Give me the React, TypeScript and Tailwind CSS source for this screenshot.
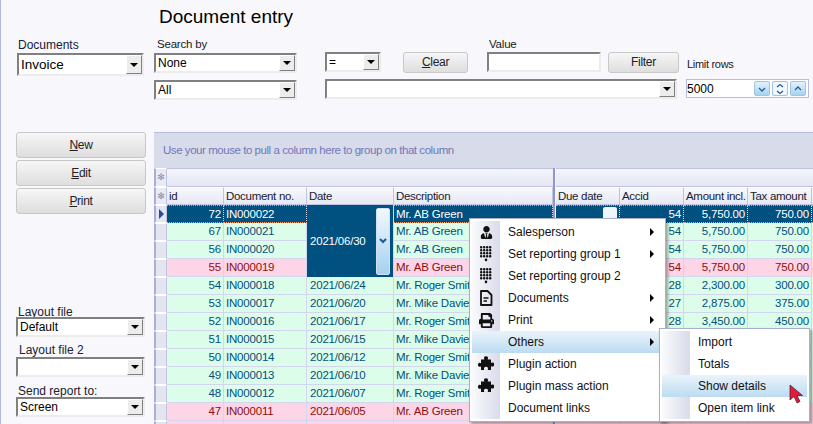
import React from 'react';
import { FaUserTie, FaPrint } from 'react-icons/fa';

type Row = { id: number; label: string; doc: string; date: string; desc: string; accid: string; amount: string; tax: string; pink?: boolean };

const row = (id: number, doc: string, date: string, desc: string, accid: string, amount: string, tax: string, pink?: boolean): Row => ({
  id, label: id ? String(id) : '', doc, date, desc, accid, amount, tax, pink,
});

const rows: Row[] = [
  row(72, 'IN000022', '', 'Mr. AB Green', '54', '5,750.00', '750.00'),
  row(67, 'IN000021', '', 'Mr. AB Green', '54', '5,750.00', '750.00'),
  row(56, 'IN000020', '', 'Mr. AB Green', '54', '5,750.00', '750.00'),
  row(55, 'IN000019', '', 'Mr. AB Green', '54', '5,750.00', '750.00', true),
  row(54, 'IN000018', '2021/06/24', 'Mr. Roger Smith', '28', '2,300.00', '300.00'),
  row(53, 'IN000017', '2021/06/20', 'Mr. Mike Davies', '27', '2,875.00', '375.00'),
  row(52, 'IN000016', '2021/06/17', 'Mr. Roger Smith', '28', '3,450.00', '450.00'),
  row(51, 'IN000015', '2021/06/15', 'Mr. Mike Davies', '', '', ''),
  row(50, 'IN000014', '2021/06/12', 'Mr. Roger Smith', '', '', ''),
  row(49, 'IN000013', '2021/06/10', 'Mr. Mike Davies', '', '', ''),
  row(48, 'IN000012', '2021/06/07', 'Mr. Roger Smith', '', '', ''),
  row(47, 'IN000011', '2021/06/05', 'Mr. AB Green', '', '', '', true),
  row(0, '', '', '', '', '', '', true),
];

const Combo = ({ text, big, className = '' }: { text: string; big?: boolean; className?: string }) => (
  <div className={`flex items-stretch bg-white border-2 border-t-[#808080] border-l-[#808080] border-b-[#ececec] border-r-[#ececec] ${className}`}>
    <span className={`flex-1 pl-[2px] self-center text-black whitespace-nowrap overflow-hidden ${big ? 'text-[13.5px] leading-[19px]' : 'text-[12px] leading-[16px]'}`}>{text}</span>
    <span className="w-[16px] flex items-center justify-center bg-[#ececec] border border-t-white border-l-white border-b-[#808080] border-r-[#808080]">
      <span className="w-0 h-0 border-x-[4px] border-x-transparent border-t-[4px] border-t-black" />
    </span>
  </div>
);

const Btn = ({ className = '', children }: { className?: string; children: React.ReactNode }) => (
  <div className={`flex items-center justify-center rounded-[3px] border border-[#c8c8c8] bg-gradient-to-b from-[#f6f6f6] to-[#dedede] text-[12px] leading-[17px] tracking-[-0.3px] text-[#222] ${className}`}>
    {children}
  </div>
);

const Keypad = () => (
  <svg width="14" height="16" viewBox="0 0 14 16" fill="#111">
    {[0, 1, 2, 3].map((r) =>
      [0, 1, 2, 3].map((c) => <rect key={`${r}${c}`} x={1 + c * 3} y={r * 3} width="2.4" height="2.4" rx="1" />)
    )}
    <rect x="5.8" y="12.6" width="2.4" height="2.6" rx="1" />
  </svg>
);

const DocIcon = () => (
  <svg width="14" height="16" viewBox="0 0 14 16" fill="none" stroke="#111" strokeWidth="1.8">
    <path d="M2 1h6.500L12.500 5v10H2z" strokeLinejoin="round" />
    <path d="M4.500 8h5M4.500 11h3.500" strokeWidth="1.5" />
  </svg>
);

const Puzzle = () => (
  <svg width="16" height="16" viewBox="0 0 16 16" fill="#111">
    <path d="M6 1.500a2.200 2.200 0 0 1 4 0c.2.8-.3 1.300-.3 2H13v3.300c.7 0 1.200-.5 2-.3a2.200 2.200 0 0 1 0 4c-.8.2-1.300-.3-2-.3V14H9.700c0-.7.5-1.200.3-2a2.200 2.200 0 0 0-4 0c-.2.800.3 1.300.3 2H3v-3.500c-.7 0-1 .5-1.800.3a2.200 2.200 0 0 1 0-4C2 6.600 2.300 7 3 7V3.500h3.300c0-.7-.5-1.200-.3-2z" />
  </svg>
);

const Cursor = () => (
  <svg width="15" height="20" viewBox="0 0 15 20">
    <path d="M1 1v15l4-3.500 3 6.500 3-1.500-3-6h5.500z" fill="#e8173c" stroke="#333" strokeWidth="0.8" />
  </svg>
);

type MenuItem = { label: string; icon?: React.ReactNode; sub?: boolean; active?: boolean };

const MenuList = ({ items }: { items: MenuItem[] }) => (
  <div className="relative bg-white">
    <div className="absolute left-0 top-0 bottom-0 w-[28px] bg-gradient-to-r from-[#fbfbfd] to-[#d8dbe9]" />
    {items.map((it) => (
      <div key={it.label} className={`relative flex items-center h-[22px] text-[12px] text-[#111] ${it.active ? 'bg-gradient-to-b from-[#eaf3fb] to-[#bcdcf1]' : ''}`}>
        <span className="w-[28px] flex items-center justify-center shrink-0">{it.icon}</span>
        <span className="ml-[8px]">{it.label}</span>
        {it.sub && <span className="ml-auto mr-[9px] w-0 h-0 border-y-[4px] border-y-transparent border-l-[4px] border-l-black" />}
      </div>
    ))}
  </div>
);

const cellBorder = 'border-r border-b border-[#d2d6ee]';

export default function App() {
  return (
    <div className="relative w-[813px] h-[424px] overflow-hidden flex bg-[#f8f8fc] border-l border-[#b4b8dc] font-['Liberation_Sans',sans-serif]">
      {/* left column */}
      <div className="w-[153px] shrink-0 flex flex-col pl-[15px] pr-[6px]">
        <div className="mt-[37px] ml-[2px] h-[16px] text-[12px] leading-[16px] text-[#102040]">Documents</div>
        <Combo text="Invoice" big className="w-[127px] h-[23px] ml-[1px]" />
        <div className="mt-[56px] flex flex-col gap-[2px]">
          <Btn className="h-[26px] w-[130px]"><span><u>N</u>ew</span></Btn>
          <Btn className="h-[26px] w-[130px]"><span><u>E</u>dit</span></Btn>
          <Btn className="h-[26px] w-[130px]"><span><u>P</u>rint</span></Btn>
        </div>
        <div className="mt-[90px] ml-[2px] h-[13px] text-[12px] leading-[17px] text-[#202030]">Layout file</div>
        <Combo text="Default" className="w-[129px] h-[20px]" />
        <div className="mt-[6px] ml-[3px] h-[14px] text-[12px] leading-[14px] text-[#202030]">Layout file 2</div>
        <Combo text="" className="w-[129px] h-[20px]" />
        <div className="mt-[8px] ml-[2px] h-[12px] text-[12px] leading-[12px] text-[#202030]">Send report to:</div>
        <Combo text="Screen" className="w-[129px] h-[20px]" />
      </div>

      {/* main column */}
      <div className="flex-1 min-w-0 flex flex-col">
        <div className="h-[36px] shrink-0 pl-[5px] pt-[5px] text-[19px] leading-[24px] text-black">Document entry</div>
        <div className="h-[96px] shrink-0 grid grid-cols-[143px_28px_56px_22px_65px_19px_114px_7px_71px_7px_123px] grid-rows-[16px_21px_6px_21px] content-start">
          <div className="col-start-1 row-start-1 pl-[3px] pt-[1px] text-[11.5px] tracking-[-0.2px] leading-[14px] text-[#202020]">Search by</div>
          <div className="col-start-7 row-start-1 pl-[2px] pt-[1px] text-[11.5px] tracking-[-0.2px] leading-[14px] text-[#202020]">Value</div>
          <Combo text="None" className="col-start-1 row-start-2 mt-[1px] h-[20px]" />
          <Combo text="=" className="col-start-3 row-start-2 h-[20px]" />
          <Btn className="col-start-5 row-start-2"><span><u>C</u>lear</span></Btn>
          <div className="col-start-7 row-start-2 h-[20px] bg-white border-2 border-t-[#808080] border-l-[#808080] border-b-[#ececec] border-r-[#ececec]" />
          <Btn className="col-start-9 row-start-2">Filter</Btn>
          <div className="col-start-11 row-start-2 pl-[1px] pt-[5px] text-[11px] tracking-[-0.3px] leading-[14px] text-[#202020]">Limit rows</div>
          <Combo text="All" className="col-start-1 row-start-4 mt-[1px] h-[20px]" />
          <Combo text="" className="col-start-3 col-end-10 row-start-4 mr-[2px] h-[20px]" />
          <div className="col-start-11 row-start-4 h-[19px] flex items-center gap-[2px] bg-white border border-[#b8bcdc] pr-[2px]">
            <span className="flex-1 text-[12px] leading-none text-black">5000</span>
            <SpinBtn d="M3 5l3 3 3-3" />
            <SpinBtn d="M3 4l3-2.500 3 2.500M3 8l3 2.500 3-2.500" plain />
            <SpinBtn d="M3 7l3-3 3 3" />
          </div>
        </div>

        {/* data grid */}
        <div className="h-[36px] shrink-0 bg-[#d8dbe9] border-t border-[#b8bcdc] flex items-center pl-[9px] text-[11.5px] tracking-[-0.45px] text-[#7078b8]">
          Use your mouse to pull a column here to group on that column
        </div>
        <div className="grid grid-cols-[13px_57px_83px_87px_159px_3px_64px_64px_64px_64px_1fr] grid-rows-[19px_18px] auto-rows-[18px] bg-white text-[11.5px] tracking-[-0.2px] leading-[17px]">
          <Indicator />
          <div className="col-span-4 bg-gradient-to-b from-[#f4f5fb] to-[#e4e6f2] border-y border-[#c0c4e0]" />
          <Gap />
          <div className="col-span-5 bg-gradient-to-b from-[#f4f5fb] to-[#e4e6f2] border-y border-[#c0c4e0]" />

          <Indicator />
          {['id', 'Document no.', 'Date', 'Description'].map((h) => <Header key={h} text={h} />)}
          <Gap />
          {['Due date', 'Accid', 'Amount incl.', 'Tax amount', ''].map((h, i) => <Header key={i} text={h} />)}

          {rows.map((r, i) => {
            const selected = i === 0;
            const bg = selected ? 'bg-[#00517f] text-white border-y border-dotted border-y-[#f0a070]' : r.pink ? 'bg-[#fed5e6] text-[#8a1010]' : 'bg-[#dcfdea] text-[#00507c]';
            const c = `${bg} ${cellBorder} whitespace-nowrap overflow-hidden`;
            return (
              <React.Fragment key={i}>
                <div className="bg-[#e4e5f1] border-l-2 border-l-[#a8aed4] border-y border-y-white border-r border-r-[#c0c4e0] flex items-center justify-center">
                  {selected && <span className="w-0 h-0 border-y-[5px] border-y-transparent border-l-[5px] border-l-[#2a4a9a]" />}
                </div>
                <div className={`${c} text-right pr-[2px]`}>{r.label}</div>
                <div className={`${c} pl-[2px]`}>{r.doc}</div>
                {i === 0 && (
                  <div className="row-span-4 bg-[#00517f] text-white border-r border-[#d2d6ee] flex items-center pl-[3px] pr-[3px]">
                    <span className="flex-1">2021/06/30</span>
                    <span className="w-[14px] h-[67px] rounded-[2px] border border-[#cfe2f5] bg-gradient-to-b from-[#f2f8fd] to-[#a6d0ef] flex items-center justify-center">
                      <svg width="8" height="6" viewBox="0 0 8 6" fill="none" stroke="#1c5a9a" strokeWidth="2"><path d="M1 1l3 3 3-3" /></svg>
                    </span>
                  </div>
                )}
                {i > 3 && <div className={`${c} pl-[3px]`}>{r.date}</div>}
                <div className={`${c} pl-[2px]`}>{r.desc}</div>
                <Gap />
                <div className={`${c} flex justify-end`}>
                  {selected && <span className="mt-[1px] mr-[2px] w-[14px] h-[14px] rounded-[2px] bg-[#eef4fb]" />}
                </div>
                <div className={`${c} text-right pr-[2px]`}>{r.accid}</div>
                <div className={`${c} text-right pr-[2px]`}>{r.amount}</div>
                <div className={`${c} text-right pr-[2px]`}>{r.tax}</div>
                <div className={bg} />
              </React.Fragment>
            );
          })}
        </div>
      </div>

      {/* context menu */}
      <div className="absolute left-[468px] top-[218px] w-[197px] h-[204px] bg-white border border-[#a8b0d0] px-[2px] pt-[2px] shadow-[2px_2px_3px_rgba(0,0,0,0.35)]">
        <MenuList
          items={[
            { label: 'Salesperson', icon: <FaUserTie size={13} color="#111" />, sub: true },
            { label: 'Set reporting group 1', icon: <Keypad />, sub: true },
            { label: 'Set reporting group 2', icon: <Keypad /> },
            { label: 'Documents', icon: <DocIcon />, sub: true },
            { label: 'Print', icon: <FaPrint size={15} color="#111" />, sub: true },
            { label: 'Others', sub: true, active: true },
            { label: 'Plugin action', icon: <Puzzle /> },
            { label: 'Plugin mass action', icon: <Puzzle /> },
            { label: 'Document links' },
          ]}
        />
      </div>
      <div className="absolute left-[658px] top-[328px] w-[151px] h-[94px] bg-white border border-[#a8b0d0] px-[2px] pt-[2px] shadow-[2px_2px_3px_rgba(0,0,0,0.35)]">
        <MenuList
          items={[
            { label: 'Import' },
            { label: 'Totals' },
            { label: 'Show details', active: true },
            { label: 'Open item link' },
          ]}
        />
      </div>
      <div className="absolute left-[788px] top-[384px]"><Cursor /></div>
    </div>
  );
}

function SpinBtn({ d, plain }: { d: string; plain?: boolean }) {
  return (
    <span className={`w-[16px] h-[15px] flex items-center justify-center rounded-[2px] border border-[#9cc4e8] ${plain ? 'bg-[#f0f6fc]' : 'bg-gradient-to-b from-[#e4f1fb] to-[#a8d2f0]'}`}>
      <svg width="12" height="12" viewBox="0 0 12 12" fill="none" stroke="#20609a" strokeWidth="1.3"><path d={d} /></svg>
    </span>
  );
}

function Gap() {
  return <div className="bg-[#8f97c8] border-r border-r-[#f4f5fb]" />;
}

function Indicator() {
  return (
    <div className="bg-[#e9eaf4] border-l-2 border-l-[#a8aed4] border-y border-y-white border-r border-r-[#c0c4e0] flex items-center justify-center font-['DejaVu_Sans',sans-serif] text-[9px] leading-none text-[#8088b8]">✻</div>
  );
}

function Header({ text }: { text: string }) {
  return (
    <div className="bg-gradient-to-b from-[#f8f8fc] to-[#e6e8f3] border-r border-b border-t border-[#c0c4e0] border-t-white pl-[2px] tracking-[-0.3px] text-[#202030] whitespace-nowrap overflow-hidden">
      {text}
    </div>
  );
}
